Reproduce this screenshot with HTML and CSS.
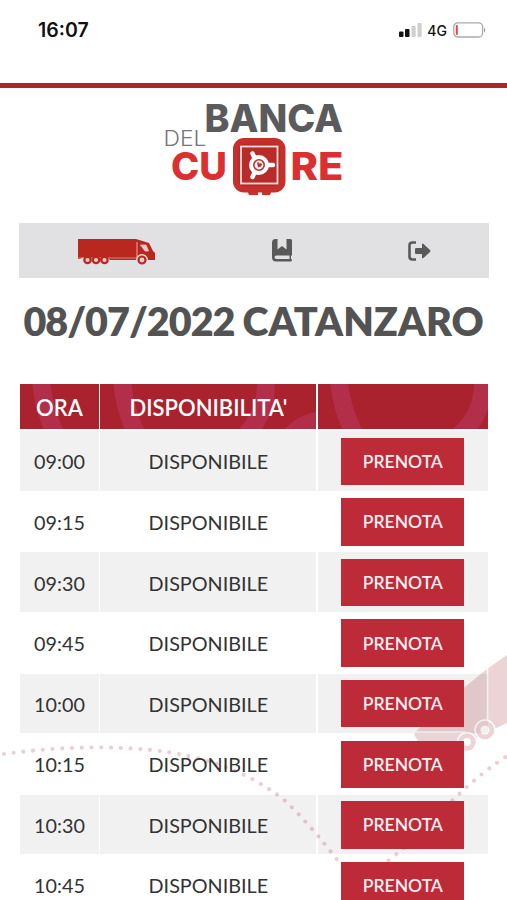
FILE: index.html
```html
<!DOCTYPE html>
<html lang="it">
<head>
<meta charset="utf-8">
<meta name="viewport" content="width=device-width, initial-scale=1">
<title>Banca del Cuore</title>
<link rel="stylesheet" href="styles.css">
</head>
<body>
<svg class="backdrop" viewBox="0 0 507 900" aria-hidden="true">
  <path d="M414 734 L434 712 L487 669 L507 655 V723 L476 738 L454 747 H424 Q417 741 414 734Z" fill="#ecd3d6"/>
  <path d="M487.500 666V722M414 732H465" stroke="#fff" stroke-width="1.500"/>
  <g fill="#ecd3d6" stroke="#fff" stroke-width="1.500"><circle cx="467" cy="742" r="9.500"/><circle cx="485" cy="730" r="10"/></g>
  <g fill="#fff"><circle cx="467" cy="742" r="4"/><circle cx="485" cy="730" r="4.500"/></g>
  <path class="dots" d="M4 754 C70 745 140 745 188 756 S258 782 275 793 S323 841 338 861 C350 878 376 871 393 857 C430 828 455 790 507 756"/>
</svg>
<header class="status">
  <span class="clock">16:07</span>
  <span class="signals">
    <svg width="24" height="16" viewBox="0 0 24 16"><g fill="#111"><rect x="0" y="9.500" width="4.500" height="5.500" rx="1"/><rect x="6" y="7" width="4.500" height="8" rx="1"/></g><g fill="#d0d0d0"><rect x="12.500" y="4" width="4.200" height="11" rx="1"/><rect x="18.500" y="1" width="4.200" height="14" rx="1"/></g></svg>
    <span class="network">4G</span>
    <svg width="34" height="16" viewBox="0 0 34 16"><rect x=".8" y=".8" width="28.800" height="14.200" rx="4" fill="#fff" stroke="#aaa" stroke-width="1.300"/><rect x="2.800" y="3" width="2" height="10" rx="1" fill="#f0443a"/><path d="M31 5.500Q33.500 8 31 10.500Z" fill="#999"/></svg>
  </span>
</header>
<main>
  <svg class="logo" width="190" height="110" viewBox="160 88 190 110" role="img" aria-label="Banca del Cuore">
    <text class="banca" x="204.500" y="131.500" textLength="138.500" lengthAdjust="spacingAndGlyphs">BANCA</text>
    <text class="del" x="163.500" y="146" textLength="43" lengthAdjust="spacingAndGlyphs">DEL</text>
    <text class="cuore" x="171" y="179.500" textLength="56" lengthAdjust="spacingAndGlyphs">CU</text>
    <text class="cuore" x="290.500" y="179.500" textLength="53" lengthAdjust="spacingAndGlyphs">RE</text>
    <path d="M247 190h11v5h-9zM262 190h10l-2 5h-8z" fill="#c9302c"/>
    <rect x="233" y="138" width="52.500" height="54.500" rx="11" fill="#c5302d"/>
    <rect x="238.500" y="143.500" width="41.500" height="43" rx="6" fill="#b52b28"/>
    <rect x="241" y="146.500" width="36.500" height="37" fill="#b92b28" stroke="#f5dedd" stroke-width="1.800"/>
    <path d="M252.500 153.500L258 165M252.500 177L258 165M258 165H273" stroke="#fff" stroke-width="4.500" stroke-linecap="round"/>
    <circle cx="259" cy="165" r="10" fill="#fff"/>
    <circle cx="259" cy="165" r="5.200" fill="none" stroke="#c5302d" stroke-width="1.600"/>
    <path d="M257 162.500q2-1 2.500 1q3-1 2.500 1.500q-1 2-4 2.500z" fill="#c5302d"/>
  </svg>
  <nav class="menu">
    <a class="item"><svg width="79" height="28" viewBox="77 238 79 28"><path d="M78 240H136L149 244L153 252L155 254V261H148A6 6 0 0 0 136 261H110A5 5 0 0 0 102 260Q101 263 97 260Q94 257 91 260Q89 263 86 260Q83 257 80 260H78Z" fill="#b9281e"/><path d="M137 243V259M140.500 246H146L148.500 252L145 252Z" fill="#edc9c5" stroke="#edc9c5" stroke-width=".8"/><path d="M78 259H136" stroke="#e5aaa5" stroke-width=".7"/><g fill="#e5cbc9" stroke="#b9281e" stroke-width="2.200"><circle cx="87.500" cy="261" r="3.200"/><circle cx="96" cy="261" r="3.200"/><circle cx="104.500" cy="261" r="3.200"/><circle cx="142" cy="261" r="3.500"/></g></svg></a>
    <a class="item"><svg width="20" height="23" viewBox="0 0 20 23"><path d="M3.500 0H5.500V10.500L10 7L14.500 10.500V0H18.500Q20 0 20 1.500V15.500Q20 16.500 19 17V20Q20 20.500 20 21.300Q20 22.500 18.500 22.500H4Q0 22.500 0 18.500V4Q0 0 3.500 0ZM4.500 16.500Q2.500 16.500 2.500 18.200Q2.500 20 4.500 20H17.500V16.500Z" fill="#595959" fill-rule="evenodd"/></svg></a>
    <a class="item"><svg width="23" height="20" viewBox="0 0 23 20"><path d="M8 1.500H4.500Q1.500 1.500 1.500 4.500V15.500Q1.500 18.500 4.500 18.500H8" fill="none" stroke="#595959" stroke-width="2.600"/><path d="M8 7H14V3.500Q14 2 15.500 3L22 9Q22.800 10 22 11L15.500 17Q14 18 14 16.500V13H8Q7 13 7 12V8Q7 7 8 7Z" fill="#595959"/></svg></a>
  </nav>
  <h1><span class="date">08/07/2022</span> CATANZARO</h1>
  <section class="slots">
    <div class="row head">
      <div class="cell"><svg class="swirl" viewBox="20 384 79 45" preserveAspectRatio="none"><path d="M41 380Q43 407 55 433"/></svg><span>ORA</span></div>
      <div class="cell"><svg class="swirl" viewBox="100 384 216 45" preserveAspectRatio="none"><path d="M122 380Q124 407 136 433M266 380Q266 415 246 434M290 436Q300 424 320 420"/></svg><span>DISPONIBILITA'</span></div>
      <div class="cell"><svg class="swirl" viewBox="317 384 171 45" preserveAspectRatio="none"><path d="M338 380Q340 407 353 433M483 380Q483 418 456 437"/></svg></div>
    </div>
    <div class="row"><div class="cell">09:00</div><div class="cell">DISPONIBILE</div><div class="cell"><button>PRENOTA</button></div></div>
    <div class="row"><div class="cell">09:15</div><div class="cell">DISPONIBILE</div><div class="cell"><button>PRENOTA</button></div></div>
    <div class="row"><div class="cell">09:30</div><div class="cell">DISPONIBILE</div><div class="cell"><button>PRENOTA</button></div></div>
    <div class="row"><div class="cell">09:45</div><div class="cell">DISPONIBILE</div><div class="cell"><button>PRENOTA</button></div></div>
    <div class="row"><div class="cell">10:00</div><div class="cell">DISPONIBILE</div><div class="cell"><button>PRENOTA</button></div></div>
    <div class="row"><div class="cell">10:15</div><div class="cell">DISPONIBILE</div><div class="cell"><button>PRENOTA</button></div></div>
    <div class="row"><div class="cell">10:30</div><div class="cell">DISPONIBILE</div><div class="cell"><button>PRENOTA</button></div></div>
    <div class="row"><div class="cell">10:45</div><div class="cell">DISPONIBILE</div><div class="cell"><button>PRENOTA</button></div></div>
  </section>
</main>
</body>
</html>
```
FILE: styles.css
```css
* { box-sizing: border-box; }
html, body { height: 100%; }
body {
  margin: 0;
  position: relative;
  height: 900px;
  overflow: hidden;
  background: #fff;
  color: #333;
  font-family: Lato, sans-serif;
}
.backdrop {
  position: absolute;
  inset: 0;
  width: 507px;
  height: 900px;
  z-index: -1;
}
.dots {
  fill: none;
  stroke: #edcfd3;
  stroke-width: 4.2;
  stroke-linecap: round;
  stroke-dasharray: 0 9.75;
}
.status {
  height: 88px;
  padding: 18px 20px 0 38px;
  border-bottom: 5px solid #ae2527;
  display: flex;
  justify-content: space-between;
  align-items: flex-start;
  font-family: Inter, sans-serif;
  color: #111;
}
.clock { font-size: 19.5px; font-weight: 600; line-height: 25px; }
.signals { display: flex; align-items: center; height: 24px; }
.network { font-size: 14px; font-weight: 500; margin: 0 6px 0 4px; }
main { display: flex; flex-direction: column; align-items: center; }
.logo { display: block; margin: 0 0 25px 3px; }
.logo text { font-family: Inter, sans-serif; }
.banca { font-size: 38px; font-weight: 800; fill: #5b5b5d; }
.del { font-size: 21px; font-weight: 300; fill: #777; }
.cuore { font-size: 38.5px; font-weight: 800; fill: #db302f; }
.menu {
  width: 470px;
  height: 55px;
  padding: 0 58px 0 58px;
  background: #e1e1e3;
  display: flex;
  align-items: center;
  justify-content: space-between;
}
.item { display: flex; }
h1 {
  margin: 18px 0 0;
  height: 50px;
  line-height: 50px;
  font-size: 39.5px;
  font-weight: 800;
  color: #535353;
  white-space: nowrap;
  word-spacing: -1px;
}
.date { letter-spacing: -1px; }
.slots {
  width: 468px;
  margin: 38px 0 0 1px;
  display: flex;
  flex-direction: column;
  gap: 1.2px;
}
.row {
  display: grid;
  grid-template-columns: 79px 216.3px 1fr;
  column-gap: 1.2px;
  height: 59.4px;
}
.row.head { height: 45px; margin-bottom: 1px; }
.cell {
  display: flex;
  align-items: center;
  justify-content: center;
  font-size: 19.8px;
  padding-top: 1px;
}
.row:nth-child(even) .cell { background: rgba(0, 0, 0, .055); }
.head .cell {
  position: relative;
  background: #aa222d;
  color: #fff;
  font-size: 22px;
  font-weight: 600;
}
.head span { position: relative; }
.swirl { position: absolute; inset: 0; width: 100%; height: 100%; }
.swirl path { fill: none; stroke: #b32f49; stroke-width: 18; }
button {
  width: 123px;
  height: 47.5px;
  padding: 0;
  border: 0;
  background: #bc2b37;
  color: #ffeef0;
  font: 600 17.5px Lato, sans-serif;
}
```
